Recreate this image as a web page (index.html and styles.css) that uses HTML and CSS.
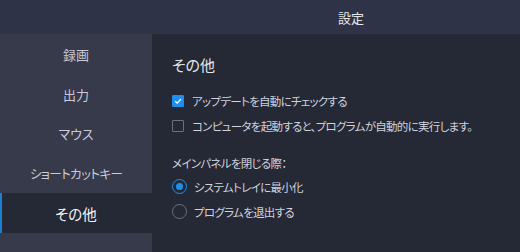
FILE: index.html
```html
<!DOCTYPE html>
<html lang="ja">
<head>
<meta charset="utf-8">
<link rel="stylesheet" href="styles.css">
</head>
<body>
<div class="window">
  <div class="titlebar"><span class="title">設定</span></div>
  <div class="main">
    <nav class="sidebar">
      <div class="nav-item">録画</div>
      <div class="nav-item">出力</div>
      <div class="nav-item">マウス</div>
      <div class="nav-item small">ショートカットキー</div>
      <div class="nav-item active">その他</div>
    </nav>
    <section class="content">
      <h1 class="heading">その他</h1>
      <div class="options">
        <label class="row"><span class="check checked"><svg viewBox="0 0 12 12" width="12" height="12"><path d="M2.6 6.2 L5 8.5 L9.6 3.6" fill="none" stroke="#fff" stroke-width="1.6"/></svg></span>アップデートを自動にチェックする</label>
        <label class="row"><span class="check"></span>コンピュータを起動すると、プログラムが自動的に実行します。</label>
      </div>
      <div class="group-label">メインパネルを閉じる際：</div>
      <div class="radios">
        <label class="row"><span class="radio on"></span>システムトレイに最小化</label>
        <label class="row"><span class="radio"></span>プログラムを退出する</label>
      </div>
    </section>
  </div>
</div>
</body>
</html>
```
FILE: styles.css
```css
html, body {
  margin: 0;
  padding: 0;
  width: 520px;
  height: 252px;
  overflow: hidden;
  font-family: "Noto Sans CJK JP", "Noto Sans", sans-serif;
  font-feature-settings: "palt";
}
.window {
  width: 520px;
  height: 252px;
  display: flex;
  flex-direction: column;
  background: #252835;
}
.titlebar {
  height: 34px;
  flex: none;
  background: #2f3347;
  display: flex;
  align-items: center;
  padding-left: 338px;
  box-sizing: border-box;
}
.title {
  color: #e6e8ee;
  font-size: 13px;
  line-height: 1;
  padding-top: 1px;
}
.main {
  flex: 1;
  display: flex;
  min-height: 0;
}
.sidebar {
  width: 152px;
  flex: none;
  background: #363a4b;
  display: flex;
  flex-direction: column;
  padding-top: 1px;
}
.nav-item {
  height: 39.6px;
  display: flex;
  align-items: center;
  justify-content: center;
  color: #c9ccd8;
  font-size: 13px;
}
.nav-item.small {
  font-size: 12.5px;
  letter-spacing: -0.6px;
}
.nav-item.active {
  background: #252835;
  color: #f4f5f8;
  font-size: 14.5px;
  box-shadow: inset 2px 0 0 #1d7fd0;
}
.content {
  flex: 1;
  min-width: 0;
  padding: 20px 0 0 20px;
  color: #d0d3de;
  font-size: 11.5px;
  letter-spacing: -0.7px;
}
.heading {
  margin: 0 0 12px 0;
  font-size: 15px;
  letter-spacing: 0;
  font-weight: normal;
  color: #e3e5ec;
  line-height: 22px;
}
.row {
  display: flex;
  align-items: center;
  height: 25px;
  white-space: nowrap;
}
.options {
  margin-bottom: 13px;
}
.check {
  width: 12px;
  height: 12px;
  box-sizing: border-box;
  border: 1px solid #6c7084;
  border-radius: 1px;
  margin-right: 8px;
  display: inline-flex;
  align-items: center;
  justify-content: center;
  flex: none;
}
.check.checked {
  background: #1e8fef;
  border-color: #1e8fef;
}
.group-label {
  height: 23px;
  display: flex;
  align-items: center;
}
.radio {
  width: 15px;
  height: 15px;
  box-sizing: border-box;
  border: 1px solid #6c7084;
  border-radius: 50%;
  margin-right: 7px;
  flex: none;
  position: relative;
}
.radio.on {
  border: 1.5px solid #1e8fef;
}
.radio.on::after {
  content: "";
  position: absolute;
  left: 2.5px;
  top: 2.5px;
  width: 7px;
  height: 7px;
  border-radius: 50%;
  background: #1e8fef;
}
```
